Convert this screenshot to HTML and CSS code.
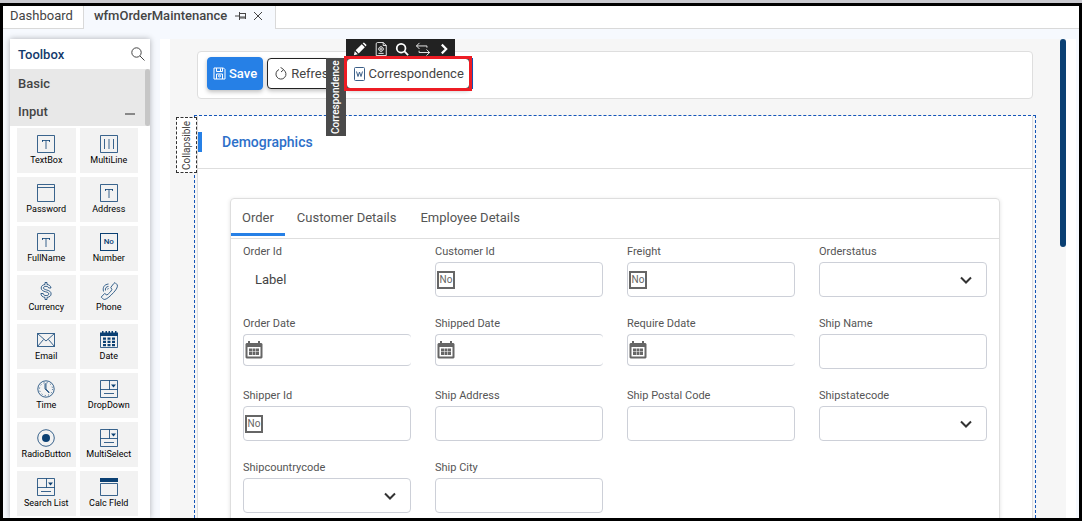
FILE: index.html
```html
<!DOCTYPE html>
<html lang="en">

<head>
    <meta charset="UTF-8">
    <meta name="viewport" content="width=device-width, initial-scale=1.0">
    <title>wfmOrderMaintenance</title>
    <link rel="stylesheet" href="styles.css">
</head>

<body>
    <!-- Icons shared by the toolbox and the fields -->
    <svg class="sprite" width="0" height="0" aria-hidden="true">
        <symbol id="i-text" viewBox="0 0 18 18">
            <path d="M.5.5h17v17H.5zM5 5.5h8M9 5.5V14M5.5 5v2M12.5 5v2" />
        </symbol>
        <symbol id="i-multiline" viewBox="0 0 18 18">
            <path d="M.5.5h17v17H.5zM4.5 4v10M9 4v10M13.5 4v10" />
        </symbol>
        <symbol id="i-password" viewBox="0 0 18 18">
            <path d="M.5.5h17v17H.5zM.5 3.5h17" />
        </symbol>
        <symbol id="i-currency" viewBox="0 0 18 18">
            <path d="M8 .5h2v2c2 .2 3.800 1.300 4 3.500h-2.300C11.500 5 10.500 4.300 9 4.300c-1.500 0-2.500.6-2.500 1.600 0 1.200 1.300 1.500 3 2 2.500.7 4.600 1.500 4.600 4 0 2-1.600 3.200-4.100 3.500v2.100H8v-2.100c-2.500-.3-4-1.700-4.100-3.900h2.300c.2 1.400 1.300 2.100 2.900 2.100 1.600 0 2.700-.6 2.700-1.700 0-1.300-1.200-1.600-3.200-2.100C6.100 9.100 4.200 8.200 4.200 6c0-2 1.500-3.200 3.800-3.500z" />
        </symbol>
        <symbol id="i-phone" viewBox="0 0 18 18">
            <path d="M15 .6l2.300 2.300c.5 1.800-.4 4-3.600 7.500-3.400 3.700-6.500 6.500-8.700 7-1 .2-2-.4-2.700-1.200l-1.100-1.100 3.400-3.600 2.300 1.500c2-1.300 4-3.500 5-5.400l-1.100-2.200L13.500 1.800zM3.500 9.500C2.500 5.500 4 2.500 8.500 2M5.500 8.500C5 6.200 6.200 4.600 8.500 4.400M7.300 7.200l1.300-.7" />
        </symbol>
        <symbol id="i-email" viewBox="0 0 18 18">
            <path d="M.5 2.500h17v13H.5zM.5 2.500L9 10l8.500-7.500M.5 15.500l6-7M17.500 15.500l-6-7" />
        </symbol>
        <symbol id="i-date" viewBox="0 0 18 18">
            <path d="M.5 2.500h17v14H.5z" />
            <path class="solid" d="M0 1.500h2V0h1.500v1.500h2V0H7v1.500h1.500V0H10v1.500h1.500V0H13v1.500h2V0h1.500v1.500H18V5H0zM3 6.500h3v2.300H3zM7.500 6.500h3v2.300h-3zM12 6.500h3v2.300h-3zM3 9.700h3V12H3zM7.500 9.700h3V12h-3zM12 9.700h3V12h-3zM3 13h3v2.200H3zM7.500 13h3v2.200h-3zM12 13h3v2.200h-3z" />
        </symbol>
        <symbol id="i-time" viewBox="0 0 18 18">
            <circle cx="9" cy="9" r="8.200" />
            <circle cx="9" cy="9" r="6.500" stroke-dasharray="1 2.400" />
            <path d="M9 3v6l3.500 3.500M8 3.500V9l4 4" />
        </symbol>
        <symbol id="i-dropdown" viewBox="0 0 18 18">
            <path d="M.5.500h17v17H.5zM.5 9.500h17M9.500.5v9M4 13.500h10" />
            <path class="solid" d="M11 4.500h5L13.500 7.500z" />
        </symbol>
        <symbol id="i-radio" viewBox="0 0 18 18">
            <circle cx="9" cy="9" r="8.300" />
            <circle class="solid" cx="9" cy="9" r="4" />
        </symbol>
        <symbol id="i-calc" viewBox="0 0 18 18">
            <path class="solid" d="M0 0h18v4H0z" />
            <path d="M.5 5.500h17v12H.5z" />
        </symbol>
        <symbol id="i-calendar" viewBox="0 0 18 18">
            <path class="solid" fill-rule="evenodd" d="M3 2V0h2v2h8V0h2v2h1.500l1 1v13.500l-1 1h-15l-1-1V3l1-1zM2.500 6v9.500h13V6z" />
            <path class="solid" d="M4 7.500h3v3H4zM7.500 7.500h3v3h-3zM11 7.500h3v3h-3zM4 11h3v3H4zM7.500 11h3v3h-3zM11 11h3v3h-3z" />
        </symbol>
        <symbol id="i-chevron" viewBox="0 0 12 12">
            <path d="M1 3.500l5 5 5-5" />
        </symbol>
    </svg>

    <div class="window">
        <nav class="tabs">
            <a class="tab" href="#dashboard">Dashboard</a>
            <div class="tab tab-active">
                <a href="#wfmOrderMaintenance">wfmOrderMaintenance</a>
                <button class="tab-btn" aria-label="Pin tab">
                    <svg width="12" height="10" viewBox="0 0 12 10"><path d="M0 5h4M4.500 1v8M4.500 2.500h6v4.500h-6M4.500 6h6M10.500 2v6" /></svg>
                </button>
                <button class="tab-btn" aria-label="Close tab">
                    <svg width="10" height="10" viewBox="0 0 10 10"><path d="M1 1l8 8M9 1L1 9" /></svg>
                </button>
            </div>
        </nav>

        <div class="workspace">
            <aside class="toolbox">
                <header class="toolbox-header">
                    <h2>Toolbox</h2>
                    <button class="search" aria-label="Search">
                        <svg width="14" height="14" viewBox="0 0 14 14"><circle cx="5.500" cy="5.500" r="4.700" /><path d="M9 9l4.500 4.500" /></svg>
                    </button>
                </header>
                <div class="toolbox-body">
                    <button class="group">Basic</button>
                    <button class="group">Input <span class="minus"></span></button>
                    <div class="tools">
                        <button class="tool"><svg><use href="#i-text" /></svg>TextBox</button>
                        <button class="tool"><svg><use href="#i-multiline" /></svg>MultiLine</button>
                        <button class="tool"><svg><use href="#i-password" /></svg>Password</button>
                        <button class="tool"><svg><use href="#i-text" /></svg>Address</button>
                        <button class="tool"><svg><use href="#i-text" /></svg>FullName</button>
                        <button class="tool"><span class="no">No</span>Number</button>
                        <button class="tool"><svg><use href="#i-currency" /></svg>Currency</button>
                        <button class="tool"><svg><use href="#i-phone" /></svg>Phone</button>
                        <button class="tool"><svg><use href="#i-email" /></svg>Email</button>
                        <button class="tool"><svg><use href="#i-date" /></svg>Date</button>
                        <button class="tool"><svg><use href="#i-time" /></svg>Time</button>
                        <button class="tool"><svg><use href="#i-dropdown" /></svg>DropDown</button>
                        <button class="tool"><svg><use href="#i-radio" /></svg>RadioButton</button>
                        <button class="tool"><svg><use href="#i-dropdown" /></svg>MultiSelect</button>
                        <button class="tool"><svg><use href="#i-dropdown" /></svg>Search List</button>
                        <button class="tool"><svg><use href="#i-calc" /></svg>Calc FIeld</button>
                    </div>
                    <span class="toolbox-thumb"></span>
                </div>
            </aside>

            <main class="designer">
                <div class="canvas">
                    <div class="actions">
                        <button class="btn btn-primary">
                            <svg width="13" height="13" viewBox="0 0 13 13"><path d="M1 1h9.500L12 2.500V12H1zM3.500 1v3.500h6V1M3.500 12V7h6v5" /><path d="M7.500 1.500v2.500" /><circle cx="6.500" cy="9" r="1" /></svg>
                            Save
                        </button>
                        <button class="btn">
                            <svg width="12" height="13" viewBox="0 0 12 13"><path d="M8.500 2.800A5 5 0 1 1 4 2.500M5.500.3L8.700 2.600 6 5" /></svg>
                            Refresh
                        </button>
                        <div class="selected">
                            <button class="btn">
                                <svg class="word" width="11" height="14" viewBox="0 0 11 14"><rect x=".5" y=".5" width="10" height="13" rx="1" /><path d="M2.500 4.500l1.500 5 1.500-4.500L7 9.500l1.500-5" /></svg>
                                Correspondence
                            </button>
                            <div class="quick">
                                <button aria-label="Edit"><svg viewBox="0 0 16 16"><path class="solid" d="M1 15l1-4.500L5.500 14zM3 9.500L10 2.500 13.500 6 6.500 13zM11 1.500L12.500.5l3 3-1 1.500z" /></svg></button>
                                <button aria-label="Properties"><svg viewBox="0 0 16 16"><path d="M2.500 1.500L4 .5h6.500l3.500 3.500v11.500H2.500zM10.500.5V4H14" /><circle cx="8" cy="8" r="2.500" /><circle cx="8" cy="8" r=".7" /><path d="M5 13h6M8 4.500v1M8 10.500v1M4.500 8h1M10.500 8h1" /></svg></button>
                                <button aria-label="Zoom"><svg viewBox="0 0 16 16"><g stroke-width="2"><circle cx="7" cy="7" r="5" /><path d="M10.500 10.500l4.500 4.500" /></g></svg></button>
                                <button aria-label="Swap"><svg viewBox="0 0 16 16"><path d="M4 1L.5 4.500 4 8M.5 4.500h12v2M12 8.500l3.500 3.500-3.500 3.500M15.500 12h-12v-2" /></svg></button>
                                <button aria-label="Next"><svg viewBox="0 0 16 16"><path stroke-width="2.500" d="M5.500 3l5 5-5 5" /></svg></button>
                            </div>
                            <span class="side-tag">Correspondence</span>
                        </div>
                    </div>

                    <div class="drop-area">
                        <span class="collapsible-tag">Collapsible</span>
                        <section class="panel">
                            <h3 class="panel-title">Demographics</h3>
                            <div class="card">
                                <nav class="card-tabs">
                                    <a class="active" href="#order">Order</a>
                                    <a href="#customer">Customer Details</a>
                                    <a href="#employee">Employee Details</a>
                                </nav>
                                <form class="fields">
                                    <div class="field">
                                        <label for="orderId">Order Id</label>
                                        <output id="orderId">Label</output>
                                    </div>
                                    <div class="field">
                                        <label for="customerId">Customer Id</label>
                                        <input id="customerId" type="text">
                                        <span class="no">No</span>
                                    </div>
                                    <div class="field">
                                        <label for="freight">Freight</label>
                                        <input id="freight" type="text">
                                        <span class="no">No</span>
                                    </div>
                                    <div class="field">
                                        <label for="orderStatus">Orderstatus</label>
                                        <select id="orderStatus"></select>
                                        <svg class="chevron"><use href="#i-chevron" /></svg>
                                    </div>
                                    <div class="field">
                                        <label for="orderDate">Order Date</label>
                                        <input id="orderDate" class="date" type="text">
                                        <svg class="calendar"><use href="#i-calendar" /></svg>
                                    </div>
                                    <div class="field">
                                        <label for="shippedDate">Shipped Date</label>
                                        <input id="shippedDate" class="date" type="text">
                                        <svg class="calendar"><use href="#i-calendar" /></svg>
                                    </div>
                                    <div class="field">
                                        <label for="requireDate">Require Ddate</label>
                                        <input id="requireDate" class="date" type="text">
                                        <svg class="calendar"><use href="#i-calendar" /></svg>
                                    </div>
                                    <div class="field">
                                        <label for="shipName">Ship Name</label>
                                        <input id="shipName" type="text">
                                    </div>
                                    <div class="field">
                                        <label for="shipperId">Shipper Id</label>
                                        <input id="shipperId" type="text">
                                        <span class="no">No</span>
                                    </div>
                                    <div class="field">
                                        <label for="shipAddress">Ship Address</label>
                                        <input id="shipAddress" type="text">
                                    </div>
                                    <div class="field">
                                        <label for="shipPostal">Ship Postal Code</label>
                                        <input id="shipPostal" type="text">
                                    </div>
                                    <div class="field">
                                        <label for="shipState">Shipstatecode</label>
                                        <select id="shipState"></select>
                                        <svg class="chevron"><use href="#i-chevron" /></svg>
                                    </div>
                                    <div class="field">
                                        <label for="shipCountry">Shipcountrycode</label>
                                        <select id="shipCountry"></select>
                                        <svg class="chevron"><use href="#i-chevron" /></svg>
                                    </div>
                                    <div class="field">
                                        <label for="shipCity">Ship City</label>
                                        <input id="shipCity" type="text">
                                    </div>
                                </form>
                            </div>
                        </section>
                    </div>
                    <span class="canvas-thumb"></span>
                </div>
            </main>
        </div>
    </div>
</body>

</html>
```

FILE: styles.css
```css
html {
    box-sizing: border-box;
    font-family: Roboto, sans-serif;
    font-size: 13px;
}

*,
*:before,
*:after {
    box-sizing: inherit;
}

body {
    margin: 0;
    height: 100vh;
    padding-top: 3px;
    background-color: #c9c9cf;
    color: #444;
}

h2,
h3 {
    margin: 0;
    font-weight: 500;
}

a {
    color: inherit;
    text-decoration: none;
}

button {
    padding: 0;
    border: 0;
    background: none;
    color: inherit;
    font-family: inherit;
    font-size: inherit;
}

svg {
    fill: none;
    stroke: currentColor;
}

.solid {
    fill: currentColor;
    stroke: none;
}

.sprite {
    position: absolute;
}

.window {
    height: 100%;
    display: flex;
    flex-direction: column;
    border: 3px solid #000;
    background-color: #f6f9fe;
    overflow: hidden;
}

/* Document tabs */
.tabs {
    display: flex;
    height: 23px;
    flex-shrink: 0;
    background-color: #fff;
    box-shadow: inset 0 -1px #d9d9d9;
}

.tab {
    display: flex;
    align-items: center;
    padding: 0 10px 4px 7px;
    border-right: 1px solid #d9d9d9;
}

.tab-active {
    gap: 8px;
    padding-left: 10px;
    padding-right: 12px;
    background-color: #f6f9fe;
    font-weight: 500;
}

.tab-btn {
    display: flex;
}

.tab-btn + .tab-btn {
    margin-left: -2px;
}

/* Toolbox */
.workspace {
    flex: 1;
    min-height: 0;
    display: flex;
    gap: 10px;
    padding: 10px 3px 0 7px;
}

.toolbox {
    width: 140px;
    flex-shrink: 0;
    background-color: #fff;
    box-shadow: 0 0 6px rgba(0, 0, 0, .3);
}

.toolbox-header {
    display: flex;
    justify-content: space-between;
    align-items: center;
    height: 30px;
    padding: 0 5px 0 8px;
}

.toolbox-header h2 {
    color: #133a6b;
    font-size: 13px;
}

.search {
    display: flex;
}

.toolbox-body {
    position: relative;
}

.group {
    display: flex;
    justify-content: space-between;
    align-items: center;
    width: 100%;
    height: 28px;
    padding: 0 15px 0 8px;
    background-color: #e8e8e8;
    font-weight: 500;
}

.group + .group {
    height: 29px;
}

.minus {
    width: 10px;
    height: 2px;
    margin-top: 4px;
    background-color: #888;
}

.toolbox-thumb {
    position: absolute;
    top: 0;
    right: 0;
    width: 5px;
    height: 57px;
    border-radius: 3px;
    background-color: #c6c6c6;
}

.tools {
    display: grid;
    grid-template-columns: 1fr 1fr;
    grid-auto-rows: 45px;
    gap: 4px;
    padding: 2px 12px 4px 7px;
}

.tool {
    display: flex;
    flex-direction: column;
    align-items: center;
    padding-top: 7px;
    background-color: #f2f2f2;
    color: #000;
    font-size: 9px;
    line-height: 14px;
    white-space: nowrap;
}

.tool svg,
.tool .no {
    width: 18px;
    height: 18px;
    color: #0b4073;
    stroke-opacity: .8;
}

.no {
    border: 1px solid;
    font-size: 8px;
    font-weight: 500;
    line-height: 16px;
    text-align: center;
}

/* Designer */
.designer {
    flex: 1;
    min-width: 0;
    padding: 0 10px;
    background-color: #fff;
}

.canvas {
    position: relative;
    height: 100%;
    display: flex;
    flex-direction: column;
    gap: 16px;
    padding: 12px 30px 0 24px;
    background-color: #f6f6f6;
}

.canvas-thumb {
    position: absolute;
    top: 0;
    right: 0;
    width: 6px;
    height: 208px;
    border-radius: 3px;
    background-color: #0b4073;
}

.actions {
    display: flex;
    align-items: center;
    gap: 4px;
    height: 48px;
    flex-shrink: 0;
    margin: 0 3px;
    padding: 0 9px 3px;
    border: 1px solid #dedede;
    border-radius: 4px;
    background-color: #fff;
}

.btn {
    display: flex;
    align-items: center;
    gap: 4px;
    height: 31px;
    padding: 0 5px 0 7px;
    border: 1px solid #222;
    border-radius: 4px;
    background-color: #fff;
    box-shadow: 0 2px 4px rgba(0, 0, 0, .25);
}

.btn-primary {
    gap: 3px;
    height: 33px;
    padding: 0 5px;
    border-color: #2680e6;
    background-color: #2680e6;
    color: #fff;
    font-weight: 500;
}

/* Selected control with its quick actions and name tag */
.selected {
    position: relative;
    z-index: 1;
    box-shadow: 3px 0 #1556b8;
}

.selected:before {
    content: "";
    position: absolute;
    z-index: 1;
    inset: -2px;
    border: 3px solid #ed1c24;
    pointer-events: none;
}

.word {
    color: #3b5f88;
}

.quick {
    position: absolute;
    left: 0;
    bottom: 30px;
    display: flex;
    align-items: center;
    gap: 7px;
    height: 20px;
    padding: 0 4px 0 7px;
    background-color: #222;
    color: #fff;
}

.quick button,
.quick svg {
    display: block;
    width: 14px;
    height: 14px;
}

.side-tag {
    position: absolute;
    top: 0;
    right: 100%;
    width: 20px;
    height: 78px;
    background-color: #4a4a4a;
    color: #fff;
    font-size: 10px;
    font-weight: 500;
    line-height: 20px;
    text-align: center;
    writing-mode: vertical-rl;
    rotate: 180deg;
}

.drop-area {
    position: relative;
    flex: 1;
    min-height: 0;
    padding: 0 2px;
    border: 1px dashed #1556b8;
    border-bottom: 0;
}

.collapsible-tag {
    position: absolute;
    top: 1px;
    right: 100%;
    width: 21px;
    height: 56px;
    margin-right: -2px;
    border: 1px dashed #333;
    background-color: #fff;
    font-size: 10px;
    line-height: 19px;
    text-align: center;
    writing-mode: vertical-rl;
    rotate: 180deg;
}

.panel {
    height: 100%;
    border: 1px solid #dedede;
    border-width: 0 1px;
    background-color: #fff;
}

.panel-title {
    display: flex;
    align-items: center;
    height: 53px;
    border-bottom: 1px solid #dedede;
    color: #2d70c9;
    font-size: 14px;
}

.panel-title:before {
    content: "";
    width: 4px;
    height: 20px;
    margin-right: 20px;
    background-color: #2680e6;
}

.card {
    margin: 29px 32px 0;
    border: 1px solid #dedede;
    border-radius: 4px;
    box-shadow: 0 1px 4px rgba(0, 0, 0, .12);
}

.card-tabs {
    display: flex;
    height: 40px;
    padding-bottom: 2px;
    border-bottom: 1px solid #dedede;
    color: #555;
}

.card-tabs a {
    display: flex;
    align-items: center;
    padding: 3px 12px 0;
    border-bottom: 3px solid transparent;
}

.card-tabs .active {
    padding: 3px 11px 0;
    border-bottom-color: #2680e6;
}

/* Form */
.fields {
    display: grid;
    grid-template-columns: repeat(4, 1fr);
    grid-auto-rows: 60px;
    gap: 12px 24px;
    padding: 0 12px 12px;
    margin-top: 3px;
}

.field {
    position: relative;
}

.field label {
    display: block;
    height: 20px;
    color: #555;
    font-size: 11px;
    line-height: 20px;
}

.field input,
.field select {
    display: block;
    width: 100%;
    height: 35px;
    padding: 0 28px;
    border: 1px solid #cdd0d8;
    border-radius: 4px;
    background-color: #fff;
    appearance: none;
    font: inherit;
}

.field .date {
    height: 32px;
    border-right: 0;
}

.field output {
    display: block;
    padding-left: 12px;
    line-height: 35px;
}

.field .no,
.calendar {
    position: absolute;
    left: 2px;
    width: 18px;
    height: 18px;
    color: #666;
}

.field .no {
    top: 29px;
    border-width: 2px;
    font-size: 10px;
    font-weight: 400;
    line-height: 14px;
}

.calendar {
    top: 27px;
}

.chevron {
    position: absolute;
    right: 15px;
    top: 32px;
    width: 12px;
    height: 12px;
    color: #333;
    stroke-width: 2;
}
```
